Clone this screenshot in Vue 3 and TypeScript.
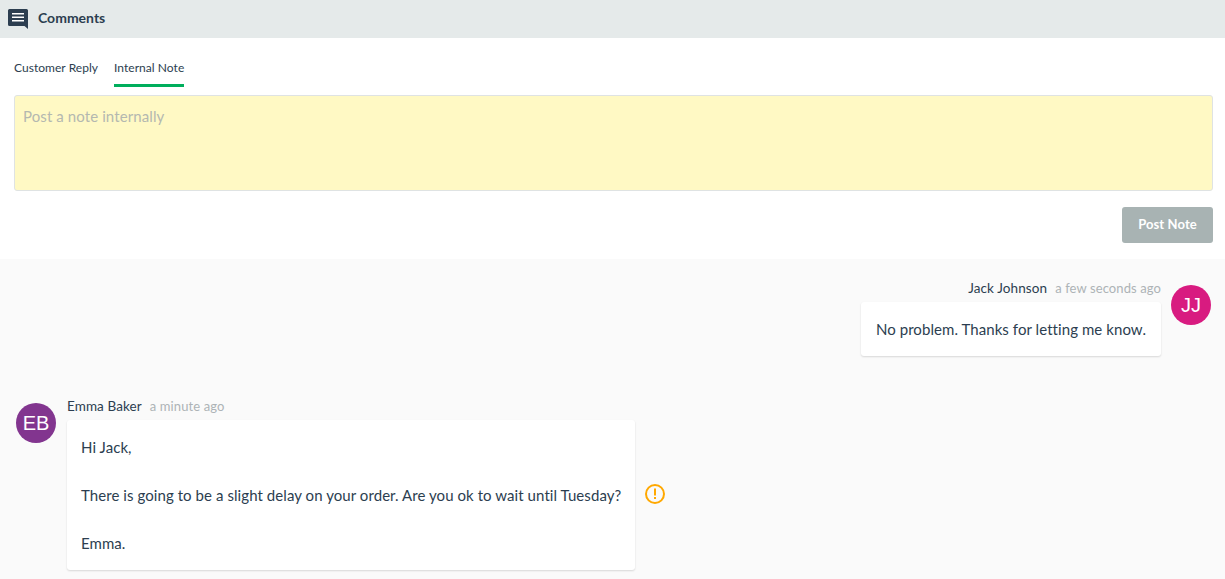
<script setup lang="ts">
const tabs: string[] = ['Customer Reply', 'Internal Note']
</script>

<template>
  <div class="page">
    <header class="head">
      <svg class="head-icon" width="20" height="20" viewBox="0 0 20 20" aria-hidden="true">
        <path fill="#2c3e50" d="M1.500 0H18.500A1.500 1.500 0 0 1 20 1.500V20L16.500 17H1.500A1.500 1.500 0 0 1 0 15.500V1.500A1.500 1.500 0 0 1 1.500 0Z" />
        <path fill="#fff" d="M4 4H16V5.500H4ZM4 7.500H16V9H4ZM4 11H16V12.500H4Z" />
      </svg>
      <span class="head-title">Comments</span>
    </header>

    <section class="composer">
      <nav class="tabs">
        <span v-for="(t, i) in tabs" :key="t" class="tab" :class="{ active: i === 1 }">{{ t }}</span>
      </nav>
      <div class="note">Post a note internally</div>
      <div class="actions">
        <button class="post" type="button">Post Note</button>
      </div>
    </section>

    <section class="feed">
      <div class="row out">
        <div class="col">
          <div class="meta"><span class="name">Jack Johnson</span><span class="time">a few seconds ago</span></div>
          <div class="bubble">No problem. Thanks for letting me know.</div>
        </div>
        <div class="avatar pink">JJ</div>
      </div>

      <div class="row in">
        <div class="avatar purple">EB</div>
        <div class="col">
          <div class="meta"><span class="name">Emma Baker</span><span class="time">a minute ago</span></div>
          <div class="bubble">
            <p>Hi Jack,</p>
            <p>There is going to be a slight delay on your order. Are you ok to wait until Tuesday?</p>
            <p>Emma.</p>
          </div>
        </div>
        <svg class="warn" width="22" height="22" viewBox="0 0 22 22" aria-hidden="true">
          <circle cx="11" cy="11" r="9" fill="none" stroke="#ffa800" stroke-width="2" />
          <path fill="#ffa800" d="M10 5.500H12V12.500H10ZM10 14H12V16H10Z" />
        </svg>
      </div>
    </section>
  </div>
</template>

<style scoped>
.page {
  height: 579px;
  overflow: hidden;
  font-family: "Lato", "Noto Sans", sans-serif;
  color: #2c3e50;
  background: #fafafa;
}
.head {
  height: 38px;
  background: #e5eaea;
  display: flex;
  align-items: center;
  padding-left: 8px;
  gap: 10px;
}
.head-title { font-size: 14px; font-weight: 700; color: #2c3e50; margin-bottom: 3px; }
.composer {
  height: 221px;
  background: #fff;
  padding: 0 12px 0 14px;
  box-sizing: border-box;
}
.tabs {
  display: flex;
  gap: 16px;
  height: 49px;
}
.tab {
  font-size: 12px;
  letter-spacing: 0.04px;
  height: 49px;
  box-sizing: border-box;
  padding-top: 21px;
  line-height: 18px;
  color: #2c3e50;
}
.tab.active { border-bottom: 3px solid #00ae5c; }
.note {
  margin-top: 8px;
  height: 96px;
  box-sizing: border-box;
  background: #fff9c4;
  border: 1px solid #dfe3e3;
  border-radius: 3px;
  padding: 8px;
  font-size: 15px;
  letter-spacing: 0.1px;
  line-height: 24px;
  color: #b4b8b0;
}
.actions {
  display: flex;
  justify-content: flex-end;
  margin-top: 16px;
}
.post {
  width: 91px;
  height: 36px;
  border: 0;
  border-radius: 3px;
  padding: 0 0 2px;
  background: #a8b3b3;
  color: #fff;
  font: 700 13px "Lato", sans-serif;
  letter-spacing: 0.1px;
}
.feed {
  padding: 20px 14px 0 16px;
  display: flex;
  flex-direction: column;
  gap: 41px;
}
.row { display: flex; align-items: flex-start; gap: 10px; }
.row.out { justify-content: flex-end; }
.row.in { gap: 11px; }
.col { display: flex; flex-direction: column; }
.out .col { align-items: flex-end; }
.meta { font-size: 13px; line-height: 18px; height: 23px; letter-spacing: 0.1px; }
.name { color: #2c3e50; margin-right: 8px; font-size: 13.5px; }
.time { color: #adb3b6; }
.bubble {
  background: #fff;
  border-radius: 3px;
  box-shadow: 0 1px 2px rgba(0, 0, 0, 0.14);
  padding: 15px 14px;
  font-size: 15px;
  letter-spacing: 0.07px;
  line-height: 24px;
  color: #2c3e50;
}
.out .bubble { padding: 15px; }
.bubble p { margin: 0 0 24px; }
.bubble p:last-child { margin: 0; }
.avatar {
  width: 40px;
  height: 40px;
  border-radius: 50%;
  color: #fff;
  font: 20px/40px "Liberation Sans", sans-serif;
  text-align: center;
  flex: none;
  margin-top: 6px;
}
.pink { background: #d81b80; }
.purple { background: #82358f; }
.warn { align-self: center; margin-top: 20px; margin-left: -2px; }
</style>
